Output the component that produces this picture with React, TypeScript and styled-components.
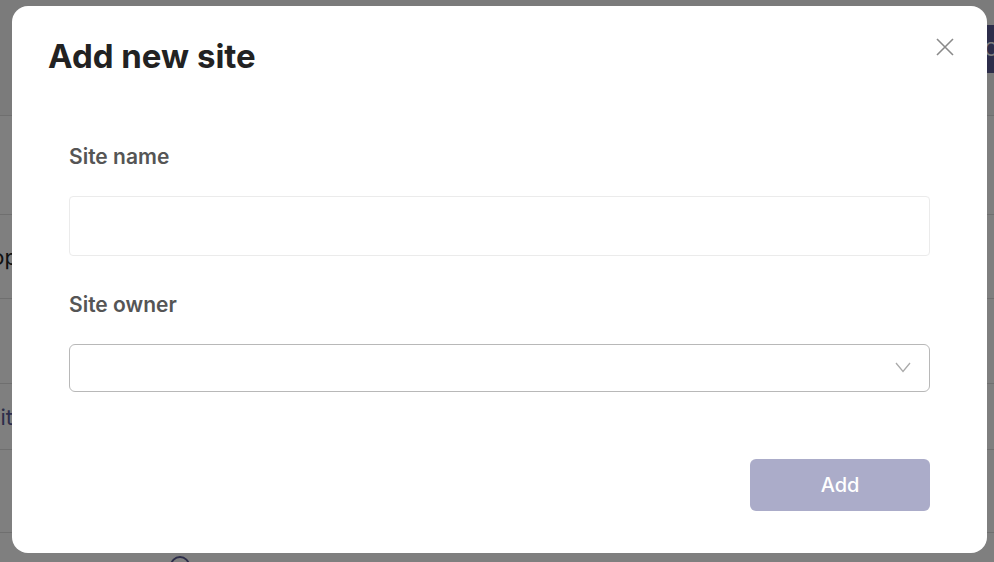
import React from 'react';
import styled, { createGlobalStyle } from 'styled-components';

const GlobalStyle = createGlobalStyle`
  html, body {
    margin: 0;
    padding: 0;
    height: 100%;
    overflow: hidden;
    background: #ffffff;
    font-family: Inter, "Noto Sans", "Liberation Sans", sans-serif;
  }
  * {
    box-sizing: border-box;
  }
`;

const Page = styled.div`
  width: 1120px;
  height: 562px;
  display: flex;
  flex-direction: column;
`;

const TopBar = styled.div`
  height: 116px;
  flex-shrink: 0;
  display: grid;
  grid-template-columns: 1fr auto;
  align-items: start;
  padding: 25px 24px 0 24px;
  background: #f6f6f6;
  border-bottom: 1px solid #dedede;
`;

const PrimaryButton = styled.button`
  height: 48px;
  padding: 0 20px;
  border: none;
  border-radius: 6px;
  background: #5a5b94;
  color: #fff;
  font-family: inherit;
  font-size: 18px;
  white-space: nowrap;
`;

const Row = styled.div<{ $h: number }>`
  height: ${(p) => p.$h}px;
  flex-shrink: 0;
  display: flex;
  align-items: center;
  border-bottom: 1px solid #dedede;
`;

const Cell = styled.div<{ $link?: boolean; $end: number }>`
  width: ${(p) => p.$end}px;
  display: flex;
  justify-content: flex-end;
  white-space: nowrap;
  font-size: 22px;
  color: ${(p) => (p.$link ? '#5a5b94' : '#222')};
`;

const Pager = styled.div`
  display: flex;
  padding: 23px 0 0 170px;
`;

const PagerDot = styled.div`
  width: 20px;
  height: 20px;
  border-radius: 50%;
  border: 2px solid #5a5b94;
`;

const Backdrop = styled.div`
  position: fixed;
  inset: 0;
  background: rgba(0, 0, 0, 0.5);
  display: flex;
  padding: 6px 7px 9px 12px;
`;

const Modal = styled.div`
  flex: 1;
  background: #fff;
  border-radius: 16px;
  padding: 31px 33px 42px 36px;
  display: flex;
  flex-direction: column;
`;

const Header = styled.div`
  display: flex;
  justify-content: space-between;
  align-items: flex-start;
`;

const Title = styled.h2`
  margin: 0;
  font-size: 33px;
  line-height: 1.2;
  font-weight: 700;
  color: #222;
`;

const CloseButton = styled.button`
  margin-top: 1px;
  padding: 0;
  border: none;
  background: none;
  width: 18px;
  height: 18px;
  display: flex;
`;

const Body = styled.div`
  margin-top: 67px;
  padding: 0 24px 0 21px;
  display: flex;
  flex-direction: column;
  gap: 36px;
`;

const Field = styled.div`
  display: flex;
  flex-direction: column;
  gap: 27px;
`;

const Label = styled.label`
  font-size: 21px;
  line-height: 1.2;
  font-weight: 600;
  color: #555;
`;

const TextInput = styled.input`
  height: 60px;
  border: 1px solid #ebebeb;
  border-radius: 4px;
  padding: 0 16px;
  font-family: inherit;
  font-size: 18px;
  outline: none;
`;

const Select = styled.div`
  height: 48px;
  border: 1px solid #b8b8b8;
  border-radius: 6px;
  display: flex;
  align-items: center;
  justify-content: flex-end;
  padding-right: 18px;
`;

const Footer = styled.div`
  margin-top: auto;
  padding-right: 24px;
  display: flex;
  justify-content: flex-end;
`;

const SubmitButton = styled.button`
  width: 180px;
  height: 52px;
  border: none;
  border-radius: 6px;
  background: #abacc9;
  color: #fff;
  font-family: inherit;
  font-size: 20px;
  font-weight: 500;
`;

const rows = [
  { h: 99, text: '', end: 14 },
  { h: 84, text: 'Shop', end: 18 },
  { h: 85, text: '', end: 14 },
  { h: 66, text: 'Visit', end: 13, link: true },
  { h: 83, text: '', end: 14 },
];

export default function App() {
  return (
    <>
      <GlobalStyle />
      <Page>
        <TopBar>
          <span />
          <PrimaryButton>Create site</PrimaryButton>
        </TopBar>
        {rows.map((r, i) => (
          <Row key={i} $h={r.h}>
            <Cell $link={r.link} $end={r.end}>{r.text}</Cell>
          </Row>
        ))}
        <Pager>
          <PagerDot />
        </Pager>
      </Page>
      <Backdrop>
        <Modal>
          <Header>
            <Title>Add new site</Title>
            <CloseButton aria-label="Close">
              <svg width="18" height="18" viewBox="0 0 18 18">
                <path d="M1 1L17 17M17 1L1 17" stroke="#8a8a8a" strokeWidth="1.6" fill="none" />
              </svg>
            </CloseButton>
          </Header>
          <Body>
            <Field>
              <Label>Site name</Label>
              <TextInput />
            </Field>
            <Field>
              <Label>Site owner</Label>
              <Select>
                <svg width="16" height="11" viewBox="0 0 16 11">
                  <polyline points="1,1 8,9.5 15,1" stroke="#aaa" strokeWidth="1.3" fill="none" />
                </svg>
              </Select>
            </Field>
          </Body>
          <Footer>
            <SubmitButton>Add</SubmitButton>
          </Footer>
        </Modal>
      </Backdrop>
    </>
  );
}
